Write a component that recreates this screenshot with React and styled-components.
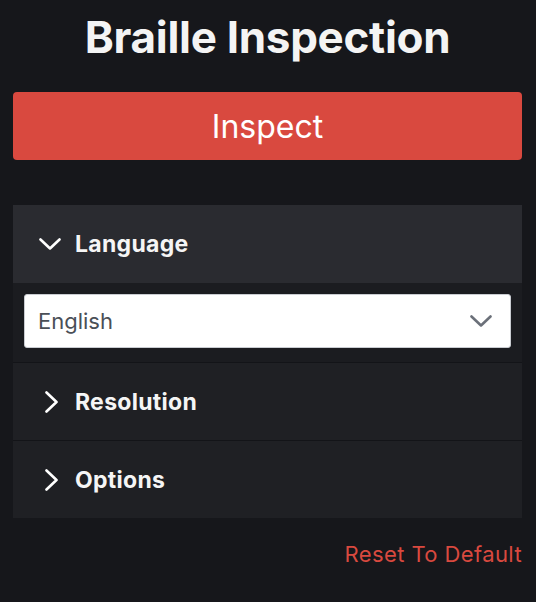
import styled, { createGlobalStyle } from 'styled-components';

const GlobalStyle = createGlobalStyle`
	body {
		margin: 0;
		background: #16171b;
		font-family: Inter, 'Noto Sans', sans-serif;
		-webkit-font-smoothing: antialiased;
	}
	* {
		box-sizing: border-box;
	}
`;

const Page = styled.div`
	padding: 0 14px 0 13px;
	display: flex;
	flex-direction: column;
`;

const Title = styled.h1`
	margin: 9px 0 0;
	text-align: center;
	color: #f4f4f4;
	font-size: 44px;
	font-weight: 700;
	line-height: 56px;
	letter-spacing: -0.3px;
`;

const InspectButton = styled.button`
	margin-top: 27px;
	height: 68px;
	border: none;
	border-radius: 4px;
	background: #d9493f;
	color: #ffffff;
	font-family: inherit;
	font-size: 32px;
	font-weight: 400;
	cursor: pointer;
`;

const Accordion = styled.div`
	margin-top: 45px;
	display: flex;
	flex-direction: column;
	background: #1b1c20;
`;

const Item = styled.div`
	display: flex;
	flex-direction: column;
	& + & {
		border-top: 1px solid #131418;
	}
`;

const Header = styled.div`
	height: ${(p) => (p.$open ? 78 : 77)}px;
	display: flex;
	align-items: center;
	gap: ${(p) => (p.$open ? 14 : 17)}px;
	padding-left: ${(p) => (p.$open ? 26 : 32)}px;
	background: ${(p) => (p.$open ? '#2a2b30' : '#1f2024')};
	color: #f5f5f5;
	font-size: 23px;
	font-weight: 700;
	letter-spacing: 0.3px;
	cursor: pointer;
`;

const Panel = styled.div`
	padding: 11px 11px 14px;
`;

const Select = styled.div`
	height: 54px;
	display: flex;
	align-items: center;
	justify-content: space-between;
	padding: 0 18px 0 13px;
	background: #ffffff;
	border: 1px solid #c9ccd1;
	border-radius: 3px;
	color: #4a4f57;
	font-size: 22px;
`;

const Reset = styled.div`
	margin-top: 23px;
	align-self: flex-end;
	color: #d9493f;
	font-size: 22px;
	letter-spacing: 0.4px;
	cursor: pointer;
`;

const ChevronDown = ({ color = '#ffffff' }) => (
	<svg width='22' height='12' viewBox='0 0 22 12' fill='none'>
		<path d='M1.5 1.5 L11 10.5 L20.5 1.5' stroke={color} strokeWidth='2.6' strokeLinecap='round' strokeLinejoin='round' />
	</svg>
);

const ChevronRight = () => (
	<svg width='13' height='22' viewBox='0 0 13 22' fill='none'>
		<path d='M1.5 1.5 L11.5 11 L1.5 20.5' stroke='#ffffff' strokeWidth='2.6' strokeLinecap='round' strokeLinejoin='round' />
	</svg>
);

const App = () => {
	return (
		<>
			<GlobalStyle />
			<Page>
				<Title>Braille Inspection</Title>
				<InspectButton>Inspect</InspectButton>
				<Accordion>
					<Item>
						<Header $open>
							<ChevronDown />
							Language
						</Header>
						<Panel>
							<Select>
								English
								<ChevronDown color='#6b7079' />
							</Select>
						</Panel>
					</Item>
					<Item>
						<Header>
							<ChevronRight />
							Resolution
						</Header>
					</Item>
					<Item>
						<Header>
							<ChevronRight />
							Options
						</Header>
					</Item>
				</Accordion>
				<Reset>Reset To Default</Reset>
			</Page>
		</>
	);
};

export default App;
